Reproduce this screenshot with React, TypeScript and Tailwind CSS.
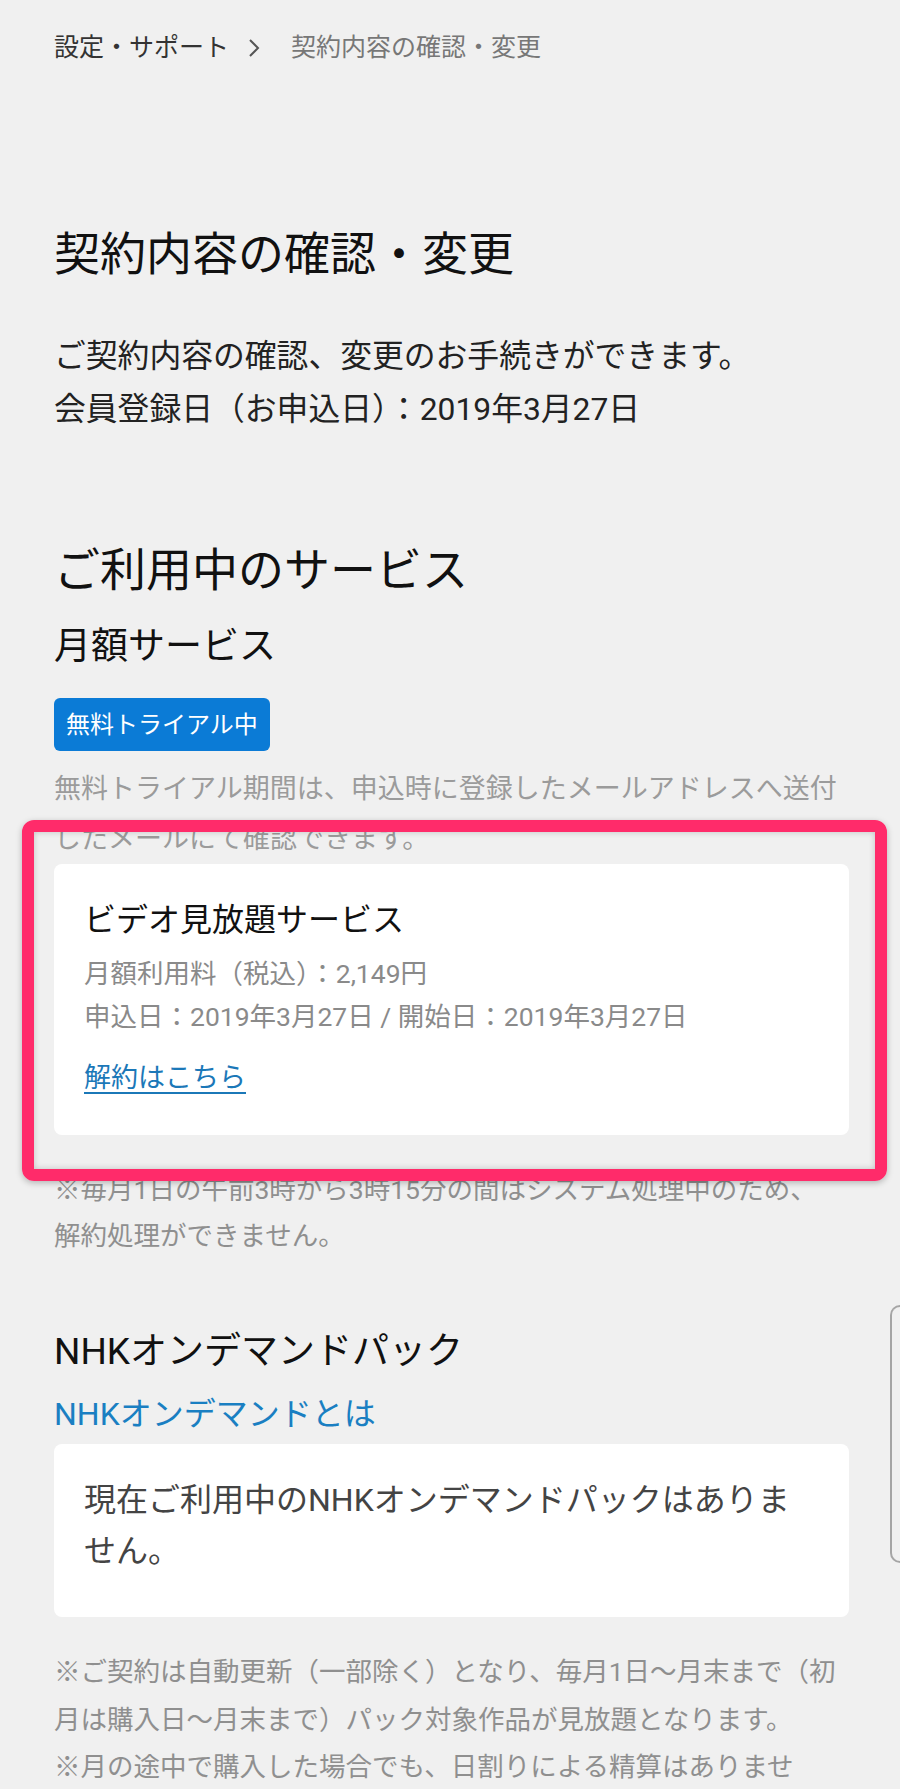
import React from 'react';

const font = { fontFamily: '"Roboto", "Noto Sans CJK JP", sans-serif' };

function Chevron() {
  return (
    <svg width="12" height="20" viewBox="0 0 12 20" className="mx-[19px] shrink-0">
      <path d="M2 2 L10 10 L2 18" fill="none" stroke="#555" strokeWidth="2" />
    </svg>
  );
}

export default function App() {
  return (
    <div
      className="relative h-[1789px] w-[900px] overflow-hidden bg-[#f0f0f0] pl-[54px] pr-[51px] pt-[28px]"
      style={font}
    >
      {/* Breadcrumb */}
      <div className="flex items-center text-[25px] leading-[40px]">
        <span className="text-[#333]">設定・サポート</span>
        <Chevron />
        <span className="ml-[12px] text-[#777]">契約内容の確認・変更</span>
      </div>

      {/* Heading */}
      <h1 className="mt-[156px] text-[46px] leading-[60px] text-[#111]">契約内容の確認・変更</h1>
      <div className="mt-[46px] text-[31.8px] leading-[53px] text-[#222]">
        <p>ご契約内容の確認、変更のお手続きができます。</p>
        <p>会員登録日（お申込日）：2019年3月27日</p>
      </div>

      {/* Services */}
      <h2 className="mt-[104px] text-[46px] leading-[60px] text-[#111]">ご利用中のサービス</h2>
      <h3 className="mt-[22px] text-[37px] leading-[50px] text-[#111]">月額サービス</h3>

      <div className="mt-[26px] inline-flex h-[53px] items-center rounded-[6px] bg-[#0b7bd6] px-[12px] text-[24px] text-white">
        無料トライアル中
      </div>

      <p className="mt-[13px] text-[27px] leading-[50px] text-[#9b9b9b]">
        無料トライアル期間は、申込時に登録したメールアドレスへ送付したメールにて確認できます。
      </p>

      <div className="rounded-[8px] bg-white pb-[37px] pl-[30px] pr-[30px] pt-[34px]">
        <div className="text-[32px] leading-[44px] text-[#111]">ビデオ見放題サービス</div>
        <div className="mt-[10px] text-[26.5px] leading-[43px] text-[#8a8a8a]">
          <p>月額利用料（税込）：2,149円</p>
          <p>申込日：2019年3月27日 / 開始日：2019年3月27日</p>
        </div>
        <a href="#" className="mt-[20px] block text-[27px] leading-[40px] text-[#1b78b8] underline underline-offset-[5px]">
          解約はこちら
        </a>
      </div>

      <p className="mt-[32px] text-[26.5px] leading-[46px] text-[#8f8f8f]">
        ※毎月1日の午前3時から3時15分の間はシステム処理中のため、
        <br />
        解約処理ができません。
      </p>

      {/* NHK */}
      <h3 className="mt-[68px] text-[37px] leading-[50px] text-[#111]">NHKオンデマンドパック</h3>
      <a href="#" className="mt-[15px] block text-[32px] leading-[44px] text-[#1a7fc2]">
        NHKオンデマンドとは
      </a>
      <div className="mt-[8px] rounded-[8px] bg-white pb-[40px] pl-[30px] pr-[36px] pt-[31px]">
        <p className="text-[32px] leading-[51px] text-[#444]">
          現在ご利用中のNHKオンデマンドパックはありません。
        </p>
      </div>

      <div className="mt-[31px] text-[26.5px] leading-[47.5px] text-[#8f8f8f]">
        <p>
          ※ご契約は自動更新（一部除く）となり、毎月1日〜月末まで（初
          <br />
          月は購入日〜月末まで）パック対象作品が見放題となります。
        </p>
        <p>
          ※月の途中で購入した場合でも、日割りによる精算はありませ
          <br />
          ん。
        </p>
      </div>

      {/* Highlight annotation */}
      <div className="pointer-events-none absolute left-[22px] top-[820px] h-[361px] w-[865px] rounded-[12px] border-[12px] border-[#ff2b6a] shadow-[0_2px_6px_rgba(0,0,0,0.25),inset_0_0_6px_rgba(0,0,0,0.2)]" />

      {/* Edge handle */}
      <div className="pointer-events-none absolute left-[890px] top-[1305px] h-[258px] w-[20px] rounded-l-[10px] border-2 border-r-0 border-[#a5a5a5]" />
    </div>
  );
}
